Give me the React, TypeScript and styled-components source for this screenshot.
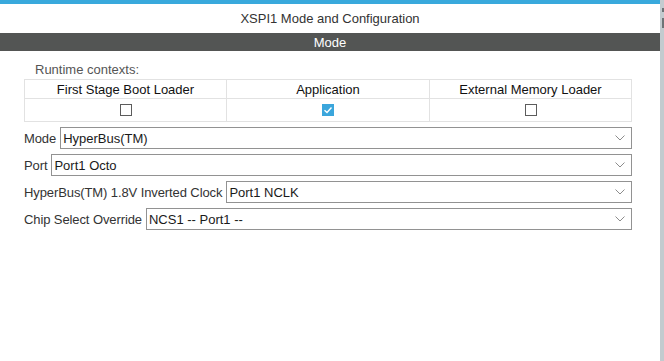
import React from "react";
import styled, { createGlobalStyle } from "styled-components";

const Global = createGlobalStyle`
  html, body { margin: 0; padding: 0; background: #ffffff; }
  body { font-family: "Liberation Sans", Arial, sans-serif; font-size: 13px; }
  #root { width: 664px; height: 361px; overflow: hidden; }
`;

const Page = styled.div`
  display: flex;
  width: 664px;
  height: 361px;
  background: #fff;
`;

const Main = styled.div`
  flex: 1;
  display: flex;
  flex-direction: column;
  min-width: 0;
`;

const ScrollStrip = styled.div`
  width: 4px;
  background: #c3cbcf;
  display: flex;
  flex-direction: column;
  align-items: flex-end;
  padding-top: 8px;
  gap: 6px;
`;

const StripMark = styled.div<{ $h: number }>`
  width: 2px;
  height: ${(p) => p.$h}px;
  background: #6e7477;
`;

const TopBar = styled.div`
  height: 4px;
  background: #39a9dc;
`;

const Title = styled.div`
  height: 29px;
  display: flex;
  align-items: center;
  justify-content: center;
  color: #333;
  font-size: 13px;
`;

const SectionBar = styled.div`
  height: 18px;
  background: #535554;
  color: #fff;
  display: flex;
  align-items: center;
  justify-content: center;
  font-size: 13px;
`;

const Content = styled.div`
  padding: 11px 28px 0 24px;
  display: flex;
  flex-direction: column;
`;

const ContextLabel = styled.div`
  padding-left: 11px;
  height: 17px;
  line-height: 15px;
  color: #555;
`;

const Table = styled.div`
  display: grid;
  grid-template-columns: 202px 203px 1fr;
  border: 1px solid #e2e2e2;
  border-right: none;
  border-bottom: none;
`;

const Cell = styled.div<{ $head?: boolean }>`
  height: ${(p) => (p.$head ? 18 : 22)}px;
  border-right: 1px solid #e2e2e2;
  border-bottom: 1px solid #e2e2e2;
  display: flex;
  align-items: center;
  justify-content: center;
  color: #111;
`;

const Box = styled.div<{ $checked?: boolean }>`
  width: 12px;
  height: 12px;
  box-sizing: border-box;
  border: 1px solid ${(p) => (p.$checked ? "#3ba6dc" : "#5c5c5c")};
  background: ${(p) => (p.$checked ? "#3ba6dc" : "#fff")};
  display: flex;
  align-items: center;
  justify-content: center;
`;

const Fields = styled.div`
  margin-top: 5px;
  display: flex;
  flex-direction: column;
  gap: 5px;
`;

const FieldRow = styled.div`
  display: flex;
  align-items: center;
  gap: 4px;
  height: 22px;
`;

const FieldLabel = styled.span`
  color: #333;
  white-space: nowrap;
  letter-spacing: -0.1px;
`;

const Select = styled.div`
  flex: 1;
  height: 22px;
  box-sizing: border-box;
  border: 1px solid #929292;
  display: flex;
  align-items: center;
  justify-content: space-between;
  padding: 0 6px 0 2px;
  color: #1a1a1a;
  background: #fff;
`;

const Check = () => (
  <svg width="10" height="10" viewBox="0 0 10 10">
    <polyline points="1.5,5.2 4,7.5 8.5,2.5" fill="none" stroke="#fff" strokeWidth="1.4" />
  </svg>
);

const Chevron = () => (
  <svg width="10" height="6" viewBox="0 0 10 6">
    <polyline points="0.5,0.5 5,5 9.5,0.5" fill="none" stroke="#8c8c8c" strokeWidth="1" />
  </svg>
);

const fields = [
  { label: "Mode", value: "HyperBus(TM)" },
  { label: "Port", value: "Port1 Octo" },
  { label: "HyperBus(TM) 1.8V Inverted Clock", value: "Port1 NCLK" },
  { label: "Chip Select Override", value: "NCS1 -- Port1 --" },
];

const contexts = [
  { name: "First Stage Boot Loader", checked: false },
  { name: "Application", checked: true },
  { name: "External Memory Loader", checked: false },
];

export default function App() {
  return (
    <>
      <Global />
      <Page>
        <Main>
          <TopBar />
          <Title>XSPI1 Mode and Configuration</Title>
          <SectionBar>Mode</SectionBar>
          <Content>
            <ContextLabel>Runtime contexts:</ContextLabel>
            <Table>
              {contexts.map((c) => (
                <Cell $head key={c.name}>{c.name}</Cell>
              ))}
              {contexts.map((c) => (
                <Cell key={c.name + "-box"}>
                  <Box $checked={c.checked}>{c.checked && <Check />}</Box>
                </Cell>
              ))}
            </Table>
            <Fields>
              {fields.map((f) => (
                <FieldRow key={f.label}>
                  <FieldLabel>{f.label}</FieldLabel>
                  <Select>
                    <span>{f.value}</span>
                    <Chevron />
                  </Select>
                </FieldRow>
              ))}
            </Fields>
          </Content>
        </Main>
        <ScrollStrip>
          <StripMark $h={4} />
          <StripMark $h={10} />
        </ScrollStrip>
      </Page>
    </>
  );
}
